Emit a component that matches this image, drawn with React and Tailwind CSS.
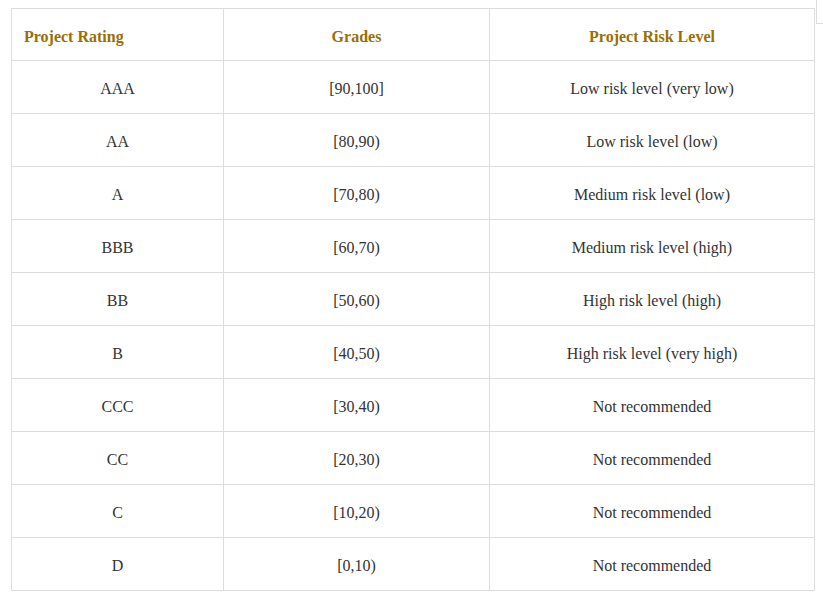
import React from "react";

const rows = [
  ["AAA", "[90,100]", "Low risk level (very low)"],
  ["AA", "[80,90)", "Low risk level (low)"],
  ["A", "[70,80)", "Medium risk level (low)"],
  ["BBB", "[60,70)", "Medium risk level (high)"],
  ["BB", "[50,60)", "High risk level (high)"],
  ["B", "[40,50)", "High risk level (very high)"],
  ["CCC", "[30,40)", "Not recommended"],
  ["CC", "[20,30)", "Not recommended"],
  ["C", "[10,20)", "Not recommended"],
  ["D", "[0,10)", "Not recommended"],
];

export default function App() {
  return (
    <div className="flex bg-white min-h-[597px] text-[16px] text-[#333] font-['Liberation_Serif',serif]">
      <div className="pl-[11px] pt-[8px]">
        <table className="border-collapse w-[803px] table-fixed">
          <colgroup>
            <col className="w-[212px]" />
            <col className="w-[266px]" />
            <col className="w-[325px]" />
          </colgroup>
          <thead>
            <tr className="h-[52px]">
              <th className="border border-[#ddd] text-left pl-[12px] pt-[4px] font-bold text-[#9a7000]">
                Project Rating
              </th>
              <th className="border border-[#ddd] text-center pt-[4px] font-bold text-[#9a7000]">
                Grades
              </th>
              <th className="border border-[#ddd] text-center pt-[4px] font-bold text-[#9a7000]">
                Project Risk Level
              </th>
            </tr>
          </thead>
          <tbody>
            {rows.map(row => (
              <tr key={row[0]} className="h-[53px]">
                {row.map((cell, i) => (
                  <td key={i} className="border border-[#ddd] text-center pt-[4px]">
                    {cell}
                  </td>
                ))}
              </tr>
            ))}
          </tbody>
        </table>
      </div>
      <div className="ml-[1px] h-[24px] flex-1 border-l border-b border-[#ddd]" />
    </div>
  );
}
